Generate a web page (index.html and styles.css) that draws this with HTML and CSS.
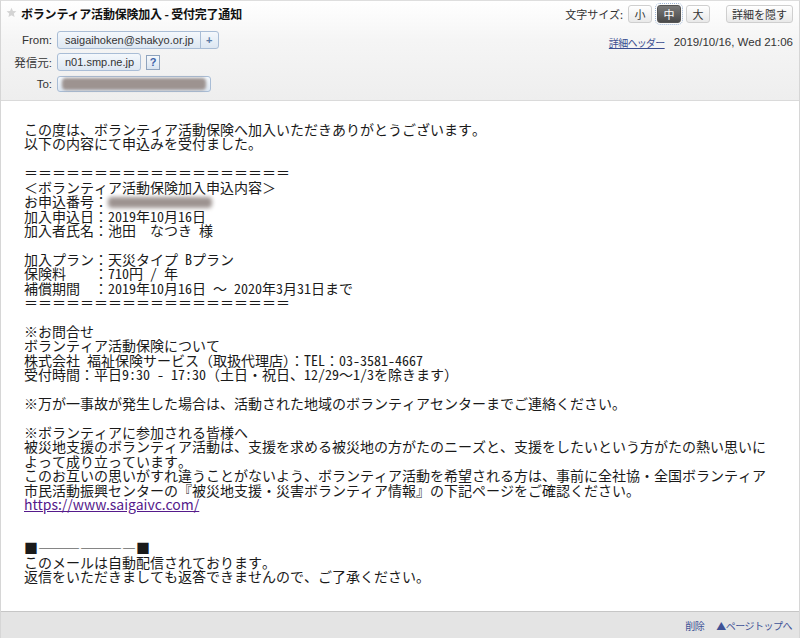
FILE: index.html
```html
<!DOCTYPE html>
<html lang="ja">
<head>
<meta charset="utf-8">
<title>ボランティア活動保険加入 - 受付完了通知</title>
<link rel="stylesheet" href="styles.css">
</head>
<body>
<div class="mail">
  <header class="head">
    <div class="top-row">
      <div class="title">
        <svg class="star" width="11" height="11" viewBox="0 0 24 24"><path d="M12 1.5l3.1 7.1 7.7.7-5.8 5.1 1.7 7.6L12 18l-6.7 4 1.7-7.6-5.8-5.1 7.7-.7z" fill="#d4d4d4"/></svg>
        <h1>ボランティア活動保険加入 - 受付完了通知</h1>
      </div>
      <div class="tools">
        <span class="tools-label">文字サイズ:</span>
        <span class="btn size">小</span>
        <span class="btn size on">中</span>
        <span class="btn size">大</span>
        <span class="btn hide">詳細を隠す</span>
      </div>
    </div>
    <div class="meta">
      <div class="fields">
        <div class="row">
          <span class="label">From:</span>
          <span class="pill"><span class="pill-text">saigaihoken@shakyo.or.jp</span><span class="pill-plus">+</span></span>
        </div>
        <div class="row">
          <span class="label">発信元:</span>
          <span class="pill"><span class="pill-text">n01.smp.ne.jp</span></span>
          <span class="help">?</span>
        </div>
        <div class="row">
          <span class="label">To:</span>
          <span class="pill to"><span class="smudge"></span></span>
        </div>
      </div>
      <div class="info">
        <a class="hdr-link" href="#">詳細ヘッダー</a>
        <span class="date">2019/10/16, Wed 21:06</span>
      </div>
    </div>
  </header>
  <main class="body">
<div class="text">この度は、ボランティア活動保険へ加入いただきありがとうございます。
以下の内容にて申込みを受付ました。

＝＝＝＝＝＝＝＝＝＝＝＝＝＝＝＝＝＝＝
＜ボランティア活動保険加入申込内容＞
お申込番号：<span class="smudge num"></span>
加入申込日：2019年10月16日
加入者氏名：池田　なつき 様

加入プラン：天災タイプ Bプラン
保険料　　：710円 / 年
補償期間　：2019年10月16日 ～ 2020年3月31日まで
＝＝＝＝＝＝＝＝＝＝＝＝＝＝＝＝＝＝＝

※お問合せ
ボランティア活動保険について
株式会社 福祉保険サービス（取扱代理店）：TEL：03-3581-4667
受付時間：平日9:30 - 17:30（土日・祝日、12/29～1/3を除きます）

※万が一事故が発生した場合は、活動された地域のボランティアセンターまでご連絡ください。

※ボランティアに参加される皆様へ
被災地支援のボランティア活動は、支援を求める被災地の方がたのニーズと、支援をしたいという方がたの熱い思いに
よって成り立っています。
このお互いの思いがすれ違うことがないよう、ボランティア活動を希望される方は、事前に全社協・全国ボランティア
市民活動振興センターの『被災地支援・災害ボランティア情報』の下記ページをご確認ください。
<a class="url" href="#">https://www.saigaivc.com/</a>


■―――――――■
このメールは自動配信されております。
返信をいただきましても返答できませんので、ご了承ください。</div>
  </main>
  <footer class="foot">
    <a href="#">削除</a>
    <a href="#">▲ページトップへ</a>
  </footer>
</div>
</body>
</html>
```
FILE: styles.css
```css
html, body {
  margin: 0;
  padding: 0;
  background: #fff;
}

.mail {
  width: 800px;
  height: 638px;
  box-sizing: border-box;
  border-top: 1px solid #dedede;
  border-left: 1px solid #d6d6d6;
  border-right: 1px solid #d6d6d6;
  display: flex;
  flex-direction: column;
  font-family: "Liberation Sans", "Noto Sans CJK JP", sans-serif;
  color: #333;
  overflow: hidden;
}

/* ---------- header ---------- */
.head {
  height: 100px;
  box-sizing: border-box;
  border-bottom: 1px solid #dadada;
  background: linear-gradient(#ffffff, #f5f5f5 40%, #eeeeee);
  flex: none;
}

.top-row {
  height: 24px;
  display: flex;
  align-items: center;
  justify-content: space-between;
}

.title {
  display: flex;
  align-items: center;
  padding-left: 5px;
}

.star {
  margin-right: 4px;
  margin-top: -2px;
}

.title h1 {
  margin: 0;
  font-size: 12px;
  letter-spacing: -0.2px;
  font-weight: bold;
  color: #111;
  font-family: "Noto Sans CJK JP", sans-serif;
}

.tools {
  display: flex;
  align-items: center;
  padding-right: 6px;
  padding-top: 2px;
  font-size: 11px;
  font-family: "Noto Sans CJK JP", sans-serif;
  color: #333;
  white-space: nowrap;
}

.btn {
  height: 16px;
  line-height: 16px;
  box-sizing: content-box;
  border: 1px solid #cfcfcf;
  border-radius: 3px;
  background: linear-gradient(#ffffff, #e9e9e9);
  text-align: center;
  font-size: 11px;
  color: #333;
  white-space: nowrap;
}

.size {
  width: 22px;
  margin-left: 5px;
}

.size.on {
  background: linear-gradient(#7a7a7a, #4a4a4a);
  border-color: #555;
  color: #fff;
  outline: 1px dotted #9fb6d6;
  outline-offset: 1px;
}

.hide {
  margin-left: 16px;
  padding: 0 5px;
}

.meta {
  display: flex;
  justify-content: space-between;
  margin-top: 6px;
}

.fields {
  display: flex;
  flex-direction: column;
  gap: 4px;
}

.row {
  height: 18px;
  display: flex;
  align-items: center;
}

.label {
  width: 51px;
  text-align: right;
  margin-right: 5px;
  font-size: 11.5px;
  color: #333;
  font-family: "Liberation Sans", "Noto Sans CJK JP", sans-serif;
}

.pill {
  height: 16px;
  display: flex;
  align-items: stretch;
  border: 1px solid #a9bdd6;
  border-radius: 3px;
  background: linear-gradient(#f4f8fc, #dde7f2);
  font-size: 11px;
  line-height: 16px;
  color: #333;
}

.pill-text {
  padding: 0 6px 0 7px;
}

.pill-plus {
  width: 17px;
  text-align: center;
  border-left: 1px solid #a9bdd6;
  color: #5a7aa6;
  font-weight: bold;
}

.help {
  margin-left: 5px;
  width: 12px;
  height: 13px;
  line-height: 13px;
  border: 1px solid #8fa3bd;
  background: linear-gradient(#f6f9fc, #d9e4f0);
  color: #3d63a8;
  font-weight: bold;
  font-size: 11px;
  text-align: center;
}

.pill.to {
  width: 154px;
  padding: 2px 4px;
  box-sizing: border-box;
  align-items: center;
}

.smudge {
  display: inline-block;
  background: #9d9390;
  filter: blur(1.5px);
  border-radius: 4px;
}

.pill.to .smudge {
  width: 146px;
  height: 12px;
}

.info {
  display: flex;
  align-items: center;
  gap: 9px;
  height: 22px;
  padding-right: 6px;
}

.hdr-link {
  color: #3a4d90;
  font-size: 10px;
  letter-spacing: -0.7px;
  font-family: "Noto Sans CJK JP", sans-serif;
  text-decoration: underline;
}

.date {
  font-size: 11.5px;
  color: #333;
}

/* ---------- body ---------- */
.body {
  flex: 1;
  background: #fff;
  padding: 21px 0 0 23px;
  min-height: 0;
}

.text {
  white-space: pre;
  font-family: "Noto Sans Mono CJK JP", "Noto Sans CJK JP", monospace;
  font-size: 14px;
  line-height: 14.42px;
  color: #1a1a1a;
}

.smudge.num {
  width: 104px;
  height: 11px;
  vertical-align: -1px;
  filter: blur(2px);
}

.url {
  display: inline-block;
  height: 14px;
  line-height: 14px;
  font-family: "Noto Sans CJK JP", sans-serif;
  color: #551a8b;
  text-decoration: underline;
}

/* ---------- footer ---------- */
.foot {
  height: 27px;
  flex: none;
  box-sizing: border-box;
  border-top: 1px solid #c6c6c6;
  background: #e4e4e4;
  display: flex;
  align-items: center;
  justify-content: flex-end;
  gap: 12px;
  padding-right: 7px;
  font-family: "Noto Sans CJK JP", sans-serif;
  font-size: 10px;
  letter-spacing: -0.5px;
}

.foot a {
  color: #3f5296;
  text-decoration: none;
}
```
